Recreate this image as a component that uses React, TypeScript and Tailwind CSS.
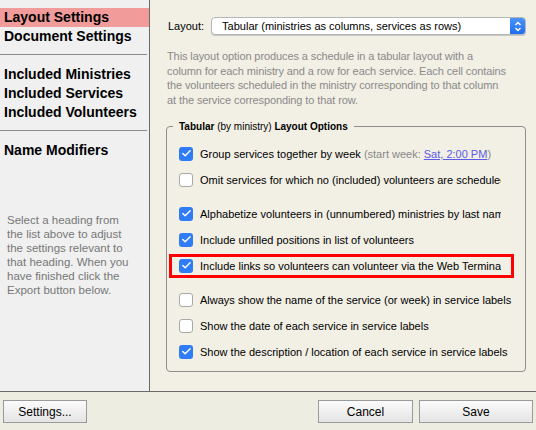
import { Check } from 'lucide-react';

const sections = [
  ['Layout Settings', 'Document Settings'],
  ['Included Ministries', 'Included Services', 'Included Volunteers'],
  ['Name Modifiers'],
];

type Option = {
  label: React.ReactNode;
  checked: boolean;
  clip?: boolean;
  gapBefore?: boolean;
  marked?: boolean;
};

const options: Option[] = [
  {
    label: (
      <>
        Group services together by week{' '}
        <span className="text-[#888]">
          (start week: <span className="text-[#5b5be8] underline">Sat, 2:00 PM</span>)
        </span>
      </>
    ),
    checked: true,
  },
  { label: 'Omit services for which no (included) volunteers are scheduled', checked: false, clip: true },
  { label: 'Alphabetize volunteers in (unnumbered) ministries by last name', checked: true, clip: true, gapBefore: true },
  { label: 'Include unfilled positions in list of volunteers', checked: true },
  { label: 'Include links so volunteers can volunteer via the Web Terminal', checked: true, clip: true, marked: true },
  { label: 'Always show the name of the service (or week) in service labels', checked: false, gapBefore: true },
  { label: 'Show the date of each service in service labels', checked: false },
  { label: 'Show the description / location of each service in service labels', checked: true },
];

const description = [
  'This layout option produces a schedule in a tabular layout with a',
  'column for each ministry and a row for each service. Each cell contains',
  'the volunteers scheduled in the ministry corresponding to that column',
  'at the service corresponding to that row.',
];

function Checkbox({ checked }: { checked: boolean }) {
  if (checked) {
    return (
      <span className="w-[14px] h-[14px] rounded-[3px] bg-[#2f7cf6] flex items-center justify-center shrink-0">
        <Check className="w-[11px] h-[11px] text-white" strokeWidth={3} />
      </span>
    );
  }
  return <span className="w-[14px] h-[14px] rounded-[3px] bg-white border border-[#a8a8a8] shrink-0" />;
}

function Button({ children, className }: { children: React.ReactNode; className: string }) {
  return (
    <button className={`h-[23px] border border-[#9a9a9a] bg-gradient-to-b from-[#fbfbfb] to-[#e4e4e4] text-[12px] text-black ${className}`}>
      {children}
    </button>
  );
}

export default function App() {
  return (
    <div className="w-[536px] h-[430px] flex flex-col font-['Liberation_Sans',sans-serif] text-black overflow-hidden">
      <div className="flex flex-1 min-h-0">
        <aside className="w-[150px] shrink-0 bg-[#f0f0f0] border-r border-[#6a6a6a] pt-[8px]">
          {sections.map((group, gi) => (
            <div key={gi}>
              {gi > 0 && <div className="mt-[8px] mb-[10px] mr-[2px] h-px bg-[#8c8c8c]" />}
              {group.map((name, i) => (
                <div
                  key={name}
                  className={`h-[19px] leading-[19px] pl-[4px] text-[14px] font-bold ${gi === 0 && i === 0 ? 'bg-[#f29b9b]' : ''}`}
                >
                  {name}
                </div>
              ))}
            </div>
          ))}
          <p className="mt-[53px] ml-[7px] w-[126px] text-[11.5px] leading-[14px] text-[#777]">
            Select a heading from the list above to adjust the settings relevant to that heading. When you have finished click the Export button below.
          </p>
        </aside>

        <main className="flex-1 bg-[#f2efe5] pl-[16px] pr-[10px] pt-[17px]">
          <div className="flex items-center gap-[7px] text-[11px]">
            <span className="ml-[2px]">Layout:</span>
            <div className="flex-1 h-[18px] flex items-stretch rounded-[4px] bg-white border border-[#b5b5b5] shadow-[0_1px_0_#c8c8c8] overflow-hidden">
              <span className="flex-1 pl-[10px] leading-[16px]">Tabular (ministries as columns, services as rows)</span>
              <span className="w-[15px] bg-gradient-to-b from-[#4b94fa] to-[#1f6cf2] flex items-center justify-center">
                <svg width="8" height="11" viewBox="0 0 8 11" fill="none" stroke="white" strokeWidth="1.4">
                  <path d="M1.5 4 L4 1.5 L6.5 4" />
                  <path d="M1.5 7 L4 9.5 L6.5 7" />
                </svg>
              </span>
            </div>
          </div>

          <div className="mt-[14px] pl-[1px] text-[11px] tracking-[-0.1px] leading-[14.7px] text-[#8a8a8a]">
            {description.map((line) => (
              <div key={line} className="whitespace-nowrap">{line}</div>
            ))}
          </div>

          <fieldset className="mt-[13px] border border-[#8e8e8e] rounded-[4px] pl-[12px] pt-[8px] pb-[6px]">
            <legend className="ml-[-6px] px-[6px] text-[10px] leading-[12px]">
              <span className="font-bold">Tabular</span> (by ministry) <span className="font-bold">Layout Options</span>
            </legend>
            {options.map((o, i) => (
              <div key={i} className={`relative h-[26px] flex items-center gap-[7px] text-[11px] ${o.gapBefore ? 'mt-[8px]' : ''}`}>
                {o.marked && <span className="absolute left-[-10px] top-[1px] w-[345px] h-[24px] border-[3px] border-[#f00]" />}
                <Checkbox checked={o.checked} />
                <span className={`whitespace-nowrap ${o.clip ? 'overflow-hidden w-[301px]' : ''}`}>{o.label}</span>
              </div>
            ))}
          </fieldset>
        </main>
      </div>

      <footer className="h-[39px] shrink-0 border-t border-[#6a6a6a] bg-[#ededE1] flex items-center px-[3px] pt-[1px]">
        <Button className="w-[84px]">Settings...</Button>
        <div className="flex-1" />
        <Button className="w-[95px]">Cancel</Button>
        <Button className="w-[114px] ml-[6px]">Save</Button>
      </footer>
    </div>
  );
}
